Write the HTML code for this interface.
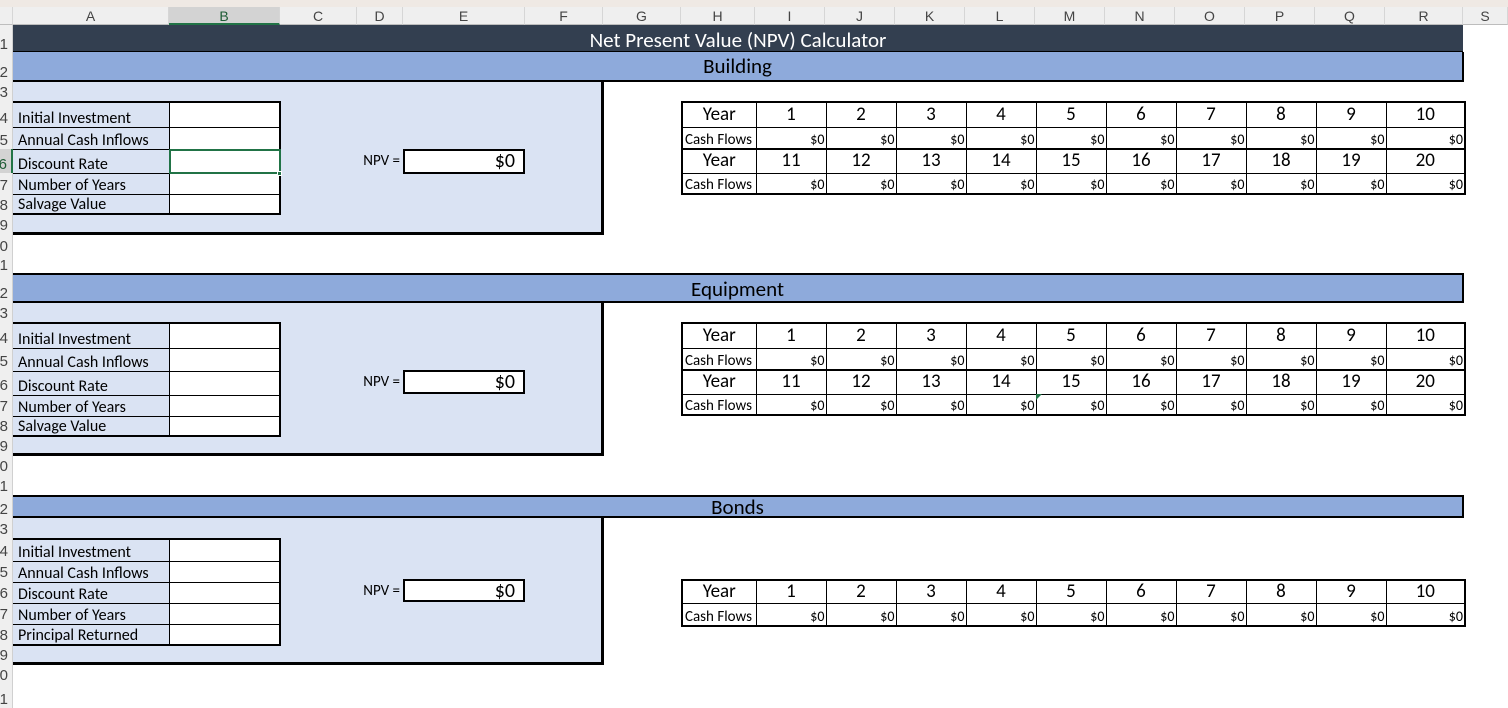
<!DOCTYPE html>
<html><head><meta charset="utf-8"><style>
*{box-sizing:border-box;margin:0;padding:0}
body{width:1508px;height:708px;overflow:hidden;background:#fff;position:relative;font-family:Carlito,"Liberation Sans",sans-serif;color:#000}
.a{position:absolute}
.top{left:0;top:0;width:1508px;height:7px;background:#efe9e4}
.ch{top:7px;height:18px;background:#efefef;border-bottom:1px solid #bdbdbd;border-right:1px solid #d6d6d6;font:14px "Liberation Sans",sans-serif;color:#444;text-align:center;line-height:18px}
.rh{left:0;width:13px;background:#efefef;border-right:1px solid #d0d0d0;font:15px "Liberation Sans",sans-serif;color:#444;overflow:hidden;white-space:nowrap;line-height:16px;padding-right:4px;display:flex;align-items:flex-end;justify-content:flex-end}
.title{left:13px;top:25px;width:1450px;height:28px;background:#333f50;color:#fff;font-size:21px;text-align:center;line-height:30px;border-bottom:2px solid #000}
.bar{left:13px;width:1451px;background:#8eaadb;font-size:21px;text-align:center;border:2px solid #000;border-left:none}
.panel{left:13px;width:591px;background:#dae3f3;border-right:3px solid #000;border-bottom:3px solid #000}
table{border-collapse:collapse;position:absolute;table-layout:fixed}
.in td{border:1px solid #000;font-size:16px;padding:0 0 0 4px;line-height:16px;vertical-align:bottom;background:#fff;white-space:nowrap}
.in td:first-child{border-left:none;background:transparent;padding-left:5px}
.in{border:2px solid #000;border-left:none}
.npvl{font-size:15px;width:60px;text-align:right}
.npv{background:#fff;border:2px solid #000;font-size:20px;text-align:right;padding-right:8px;line-height:20px}
.yt{border:2px solid #000}
.yt td{border:1px solid #000;background:#fff}
.yt .y td{font-size:19px;text-align:center;line-height:22px}
.yt .c td{font-size:14px;text-align:right;line-height:14px;vertical-align:bottom;padding:0 1px 1px 0}
.yt .c td:first-child{text-align:left;font-size:15px;padding-left:2px;white-space:nowrap}
.yt .thick td{border-top:2px solid #000}
</style></head><body>
<div class="a top"></div>
<div class="a ch" style="left:0;width:13px;background:#efefef"></div>
<div class="a ch" style="left:13px;width:156px">A</div>
<div class="a ch" style="left:169px;width:111px;background:#d3d3d3;border-bottom:2px solid #217346;color:#1e5c35">B</div>
<div class="a ch" style="left:280px;width:77px">C</div>
<div class="a ch" style="left:357px;width:46px">D</div>
<div class="a ch" style="left:403px;width:122px">E</div>
<div class="a ch" style="left:525px;width:78px">F</div>
<div class="a ch" style="left:603px;width:78px">G</div>
<div class="a ch" style="left:681px;width:74px">H</div>
<div class="a ch" style="left:755px;width:70px">I</div>
<div class="a ch" style="left:825px;width:70px">J</div>
<div class="a ch" style="left:895px;width:70px">K</div>
<div class="a ch" style="left:965px;width:70px">L</div>
<div class="a ch" style="left:1035px;width:70px">M</div>
<div class="a ch" style="left:1105px;width:70px">N</div>
<div class="a ch" style="left:1175px;width:70px">O</div>
<div class="a ch" style="left:1245px;width:70px">P</div>
<div class="a ch" style="left:1315px;width:70px">Q</div>
<div class="a ch" style="left:1385px;width:78px">R</div>
<div class="a ch" style="left:1463px;width:45px">S</div>

<div class="a rh" style="top:25px;height:28px">1</div>
<div class="a rh" style="top:53px;height:28px">2</div>
<div class="a rh" style="top:81px;height:20px">3</div>
<div class="a rh" style="top:101px;height:26px">4</div>
<div class="a rh" style="top:127px;height:22px">5</div>
<div class="a rh" style="top:149px;height:24px;background:#d3d3d3;color:#1e5c35;border-right:2px solid #217346">6</div>
<div class="a rh" style="top:173px;height:21px">7</div>
<div class="a rh" style="top:194px;height:20px">8</div>
<div class="a rh" style="top:214px;height:20px">9</div>
<div class="a rh" style="top:234px;height:21px">10</div>
<div class="a rh" style="top:255px;height:19px">11</div>
<div class="a rh" style="top:274px;height:28px">12</div>
<div class="a rh" style="top:302px;height:20px">13</div>
<div class="a rh" style="top:322px;height:25px">14</div>
<div class="a rh" style="top:347px;height:23px">15</div>
<div class="a rh" style="top:370px;height:24px">16</div>
<div class="a rh" style="top:394px;height:21px">17</div>
<div class="a rh" style="top:415px;height:20px">18</div>
<div class="a rh" style="top:435px;height:20px">19</div>
<div class="a rh" style="top:455px;height:20px">20</div>
<div class="a rh" style="top:475px;height:20px">21</div>
<div class="a rh" style="top:495px;height:23px">22</div>
<div class="a rh" style="top:518px;height:20px">23</div>
<div class="a rh" style="top:538px;height:22px">24</div>
<div class="a rh" style="top:560px;height:21px">25</div>
<div class="a rh" style="top:581px;height:21px">26</div>
<div class="a rh" style="top:602px;height:21px">27</div>
<div class="a rh" style="top:623px;height:21px">28</div>
<div class="a rh" style="top:644px;height:20px">29</div>
<div class="a rh" style="top:664px;height:20px">30</div>
<div class="a rh" style="top:684px;height:24px">31</div>

<div class="a title">Net Present Value (NPV) Calculator</div>

<!-- Building -->
<div class="a bar" style="top:52px;height:30px;border-top:none;line-height:28px">Building</div>
<div class="a panel" style="top:82px;height:153px"></div>
<table class="in" style="left:13px;top:101px;width:267px;height:114px">
<col style="width:156px"><col style="width:111px">
<tr style="height:25px"><td>Initial Investment</td><td></td></tr>
<tr style="height:22px"><td>Annual Cash Inflows</td><td></td></tr>
<tr style="height:24px"><td>Discount Rate</td><td></td></tr>
<tr style="height:21px"><td>Number of Years</td><td></td></tr>
<tr style="height:20px"><td>Salvage Value</td><td></td></tr>
</table>
<div class="a" style="left:169px;top:149px;width:112px;height:25px;border:2px solid #217346"></div>
<div class="a" style="left:277px;top:171px;width:5px;height:5px;background:#217346;border:1px solid #fff"></div>
<div class="a npvl" style="left:340px;top:152px">NPV =</div>
<div class="a npv" style="left:403px;top:149px;width:122px;height:25px">$0</div>
<table class="yt" style="left:681px;top:101px;width:783px;height:93px">
<col style="width:74px"><col span="9" style="width:70px"><col style="width:79px">
<tr class="y" style="height:25px"><td>Year</td><td>1</td><td>2</td><td>3</td><td>4</td><td>5</td><td>6</td><td>7</td><td>8</td><td>9</td><td>10</td></tr>
<tr class="c" style="height:22px"><td>Cash Flows</td><td>$0</td><td>$0</td><td>$0</td><td>$0</td><td>$0</td><td>$0</td><td>$0</td><td>$0</td><td>$0</td><td>$0</td></tr>
<tr class="y thick" style="height:24px"><td>Year</td><td>11</td><td>12</td><td>13</td><td>14</td><td>15</td><td>16</td><td>17</td><td>18</td><td>19</td><td>20</td></tr>
<tr class="c" style="height:21px"><td>Cash Flows</td><td>$0</td><td>$0</td><td>$0</td><td>$0</td><td>$0</td><td>$0</td><td>$0</td><td>$0</td><td>$0</td><td>$0</td></tr>
</table>

<!-- Equipment -->
<div class="a bar" style="top:273px;height:30px;line-height:28px">Equipment</div>
<div class="a panel" style="top:303px;height:153px"></div>
<table class="in" style="left:13px;top:322px;width:267px;height:114px">
<col style="width:156px"><col style="width:111px">
<tr style="height:25px"><td>Initial Investment</td><td></td></tr>
<tr style="height:23px"><td>Annual Cash Inflows</td><td></td></tr>
<tr style="height:24px"><td>Discount Rate</td><td></td></tr>
<tr style="height:21px"><td>Number of Years</td><td></td></tr>
<tr style="height:20px"><td>Salvage Value</td><td></td></tr>
</table>
<div class="a npvl" style="left:340px;top:373px">NPV =</div>
<div class="a npv" style="left:403px;top:370px;width:122px;height:24px">$0</div>
<table class="yt" style="left:681px;top:322px;width:783px;height:93px">
<col style="width:74px"><col span="9" style="width:70px"><col style="width:79px">
<tr class="y" style="height:25px"><td>Year</td><td>1</td><td>2</td><td>3</td><td>4</td><td>5</td><td>6</td><td>7</td><td>8</td><td>9</td><td>10</td></tr>
<tr class="c" style="height:22px"><td>Cash Flows</td><td>$0</td><td>$0</td><td>$0</td><td>$0</td><td>$0</td><td>$0</td><td>$0</td><td>$0</td><td>$0</td><td>$0</td></tr>
<tr class="y thick" style="height:24px"><td>Year</td><td>11</td><td>12</td><td>13</td><td>14</td><td>15</td><td>16</td><td>17</td><td>18</td><td>19</td><td>20</td></tr>
<tr class="c" style="height:21px"><td>Cash Flows</td><td>$0</td><td>$0</td><td>$0</td><td>$0</td><td>$0</td><td>$0</td><td>$0</td><td>$0</td><td>$0</td><td>$0</td></tr>
</table>
<svg class="a" style="left:1036px;top:394px" width="7" height="7"><polygon points="0,0 6,0 0,6" fill="#217346"/></svg>

<!-- Bonds -->
<div class="a bar" style="top:495px;height:23px;line-height:20px">Bonds</div>
<div class="a panel" style="top:518px;height:147px"></div>
<table class="in" style="left:13px;top:538px;width:267px;height:106px">
<col style="width:156px"><col style="width:111px">
<tr style="height:22px"><td>Initial Investment</td><td></td></tr>
<tr style="height:21px"><td>Annual Cash Inflows</td><td></td></tr>
<tr style="height:21px"><td>Discount Rate</td><td></td></tr>
<tr style="height:21px"><td>Number of Years</td><td></td></tr>
<tr style="height:21px"><td>Principal Returned</td><td></td></tr>
</table>
<div class="a npvl" style="left:340px;top:582px">NPV =</div>
<div class="a npv" style="left:403px;top:579px;width:122px;height:23px">$0</div>
<table class="yt" style="left:681px;top:579px;width:783px;height:44px">
<col style="width:74px"><col span="9" style="width:70px"><col style="width:79px">
<tr class="y" style="height:22px"><td>Year</td><td>1</td><td>2</td><td>3</td><td>4</td><td>5</td><td>6</td><td>7</td><td>8</td><td>9</td><td>10</td></tr>
<tr class="c" style="height:22px"><td>Cash Flows</td><td>$0</td><td>$0</td><td>$0</td><td>$0</td><td>$0</td><td>$0</td><td>$0</td><td>$0</td><td>$0</td><td>$0</td></tr>
</table>
</body></html>
